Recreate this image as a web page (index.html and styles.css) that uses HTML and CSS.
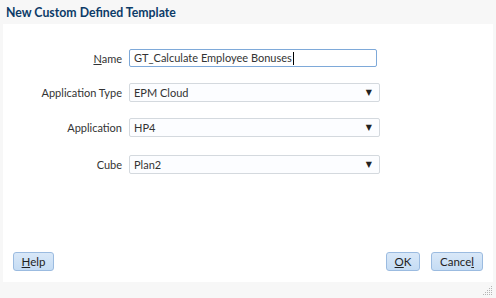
FILE: index.html
```html
<!DOCTYPE html>
<html lang="en">
<head>
    <meta charset="UTF-8">
    <meta name="viewport" content="width=device-width, initial-scale=1.0">
    <title>New Custom Defined Template</title>
    <link rel="stylesheet" href="styles.css">
</head>
<body>
    <div class="dialog">
        <div class="dialog-title">New Custom Defined Template</div>
        <div class="dialog-body">
            <form class="template-form">
                <label class="field-label" for="name"><u>N</u>ame</label>
                <div class="text-field focused" id="name">GT_Calculate Employee Bonuses<span class="caret"></span></div>

                <label class="field-label">Application Type</label>
                <div class="select-field">
                    <span>EPM Cloud</span>
                    <span class="arrow">&#9660;</span>
                </div>

                <label class="field-label">Application</label>
                <div class="select-field">
                    <span>HP4</span>
                    <span class="arrow">&#9660;</span>
                </div>

                <label class="field-label cube-label">Cube</label>
                <div class="select-field cube-field">
                    <span>Plan2</span>
                    <span class="arrow">&#9660;</span>
                </div>
            </form>

            <div class="dialog-buttons">
                <button type="button" class="btn btn-help"><u>H</u>elp</button>
                <div class="btn-group">
                    <button type="button" class="btn btn-ok"><u>O</u>K</button>
                    <button type="button" class="btn btn-cancel">Cance<u>l</u></button>
                </div>
            </div>
        </div>
        <div class="grip">
            <svg width="10" height="10" viewBox="0 0 10 10">
                <g fill="#b5b5b5">
                    <rect x="8" y="0" width="1" height="1"/>
                    <rect x="6" y="2" width="1" height="1"/>
                    <rect x="8" y="2" width="1" height="1"/>
                    <rect x="4" y="4" width="1" height="1"/>
                    <rect x="6" y="4" width="1" height="1"/>
                    <rect x="8" y="4" width="1" height="1"/>
                    <rect x="2" y="6" width="1" height="1"/>
                    <rect x="4" y="6" width="1" height="1"/>
                    <rect x="6" y="6" width="1" height="1"/>
                    <rect x="8" y="6" width="1" height="1"/>
                    <rect x="0" y="8" width="1" height="1"/>
                    <rect x="2" y="8" width="1" height="1"/>
                    <rect x="4" y="8" width="1" height="1"/>
                    <rect x="6" y="8" width="1" height="1"/>
                    <rect x="8" y="8" width="1" height="1"/>
                </g>
            </svg>
        </div>
    </div>
</body>
</html>
```

FILE: styles.css
```css
body {
    margin: 0;
    font-family: Lato, "Noto Sans", Arial, sans-serif;
    font-size: 11px;
    color: #333;
    background-color: #f7f7f7;
}

.dialog {
    position: relative;
    width: 496px;
    height: 298px;
    display: flex;
    flex-direction: column;
    box-sizing: border-box;
}

.dialog-title {
    height: 24px;
    padding: 0 6px;
    line-height: 25px;
    font-size: 12.3px;
    font-weight: bold;
    color: #0c3b68;
}

.dialog-body {
    flex: none;
    height: 258px;
    margin: 0 3px;
    background: #fff;
    display: flex;
    flex-direction: column;
    justify-content: space-between;
}

.template-form {
    display: grid;
    grid-template-columns: 119px 248px;
    column-gap: 7px;
    row-gap: 16px;
    align-items: center;
    padding-top: 25px;
}

.field-label {
    text-align: right;
    white-space: nowrap;
}

.text-field,
.select-field {
    box-sizing: border-box;
    height: 19px;
    line-height: 17px;
    padding: 0 4px;
    border: 1px solid #d4d9de;
    border-radius: 2px;
    background: #fcfdff;
    white-space: nowrap;
}

.text-field {
    height: 18px;
    line-height: 16px;
    width: 248px;
}

.text-field.focused {
    border: 1px solid #7ea9d9;
    background: #fff;
}

.caret {
    display: inline-block;
    width: 1px;
    height: 13px;
    margin-left: 1px;
    vertical-align: -3px;
    background: #000;
}

.select-field {
    width: 251px;
    display: flex;
    justify-content: space-between;
}

.arrow {
    font-family: "DejaVu Sans", sans-serif;
    font-size: 8px;
    color: #222;
    padding-right: 3px;
}

.cube-label,
.cube-field {
    margin-top: 2px;
}

.dialog-buttons {
    display: flex;
    justify-content: space-between;
    padding: 0 10px 11px 10px;
}

.btn-group {
    display: flex;
    gap: 11px;
}

.btn {
    box-sizing: border-box;
    height: 19px;
    padding: 0 6px;
    font-family: Lato, "Noto Sans", Arial, sans-serif;
    font-size: 11.5px;
    line-height: 16px;
    color: #222;
    border: 1px solid #9bbbe0;
    border-radius: 3px;
    background: linear-gradient(#d9e8f8, #c5dcf4);
    cursor: pointer;
}

.btn-help {
    width: 41px;
}

.btn-ok {
    width: 34px;
}

.btn-cancel {
    width: 52px;
}

.grip {
    position: absolute;
    right: 3px;
    bottom: 3px;
    width: 10px;
    height: 10px;
}
```
